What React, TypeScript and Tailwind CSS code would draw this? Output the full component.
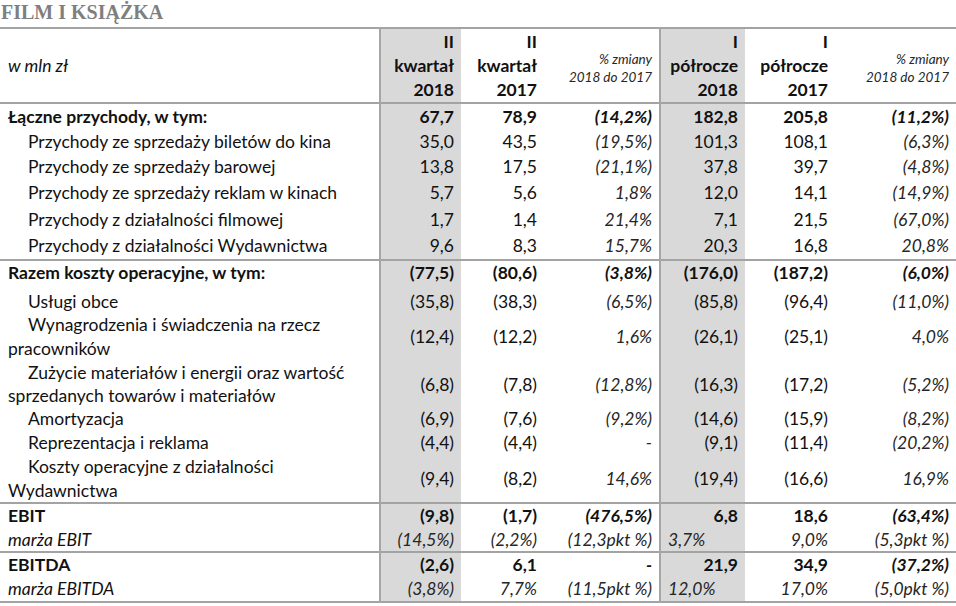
import React from 'react';

type Kind = 'total' | 'item' | 'margin';

type Row = {
  label: React.ReactNode;
  values: string[];
  kind: Kind;
  h: string;
};

const sections: Row[][] = [
  [
    { label: 'Łączne przychody, w tym:', values: ['67,7', '78,9', '(14,2%)', '182,8', '205,8', '(11,2%)'], kind: 'total', h: 'h-[26px]' },
    { label: 'Przychody ze sprzedaży biletów do kina', values: ['35,0', '43,5', '(19,5%)', '101,3', '108,1', '(6,3%)'], kind: 'item', h: 'h-[25px]' },
    { label: 'Przychody ze sprzedaży barowej', values: ['13,8', '17,5', '(21,1%)', '37,8', '39,7', '(4,8%)'], kind: 'item', h: 'h-[25px]' },
    { label: 'Przychody ze sprzedaży reklam w kinach', values: ['5,7', '5,6', '1,8%', '12,0', '14,1', '(14,9%)'], kind: 'item', h: 'h-[27px]' },
    { label: 'Przychody z działalności filmowej', values: ['1,7', '1,4', '21,4%', '7,1', '21,5', '(67,0%)'], kind: 'item', h: 'h-[27px]' },
    { label: 'Przychody z działalności Wydawnictwa', values: ['9,6', '8,3', '15,7%', '20,3', '16,8', '20,8%'], kind: 'item', h: 'h-[27px]' },
  ],
  [
    { label: 'Razem koszty operacyjne, w tym:', values: ['(77,5)', '(80,6)', '(3,8%)', '(176,0)', '(187,2)', '(6,0%)'], kind: 'total', h: 'h-[30px] align-top' },
    { label: 'Usługi obce', values: ['(35,8)', '(38,3)', '(6,5%)', '(85,8)', '(96,4)', '(11,0%)'], kind: 'item', h: 'h-[23px] leading-[23px]' },
    {
      label: (
        <>
          Wynagrodzenia i świadczenia na rzecz
          <br />
          pracowników
        </>
      ),
      values: ['(12,4)', '(12,2)', '1,6%', '(26,1)', '(25,1)', '4,0%'],
      kind: 'item',
      h: 'h-[48px]',
    },
    {
      label: (
        <>
          Zużycie materiałów i energii oraz wartość
          <br />
          sprzedanych towarów i materiałów
        </>
      ),
      values: ['(6,8)', '(7,8)', '(12,8%)', '(16,3)', '(17,2)', '(5,2%)'],
      kind: 'item',
      h: 'h-[46px] leading-[23px]',
    },
    { label: 'Amortyzacja', values: ['(6,9)', '(7,6)', '(9,2%)', '(14,6)', '(15,9)', '(8,2%)'], kind: 'item', h: 'h-[24px]' },
    { label: 'Reprezentacja i reklama', values: ['(4,4)', '(4,4)', '-', '(9,1)', '(11,4)', '(20,2%)'], kind: 'item', h: 'h-[24px]' },
    {
      label: (
        <>
          Koszty operacyjne z działalności
          <br />
          Wydawnictwa
        </>
      ),
      values: ['(9,4)', '(8,2)', '14,6%', '(19,4)', '(16,6)', '16,9%'],
      kind: 'item',
      h: 'h-[47px] leading-[23.5px]',
    },
  ],
  [
    { label: 'EBIT', values: ['(9,8)', '(1,7)', '(476,5%)', '6,8', '18,6', '(63,4%)'], kind: 'total', h: 'h-[24px]' },
    { label: 'marża EBIT', values: ['(14,5%)', '(2,2%)', '(12,3pkt %)', '3,7%', '9,0%', '(5,3pkt %)'], kind: 'margin', h: 'h-[23px] leading-[23px]' },
  ],
  [
    { label: 'EBITDA', values: ['(2,6)', '6,1', '-', '21,9', '34,9', '(37,2%)'], kind: 'total', h: 'h-[24px]' },
    { label: 'marża EBITDA', values: ['(3,8%)', '7,7%', '(11,5pkt %)', '12,0%', '17,0%', '(5,0pkt %)'], kind: 'margin', h: 'h-[24px]' },
  ],
];

const shaded = [true, false, false, true, false, false];
const leftLine = [true, false, false, true, false, false];

const ValueCell = ({ value, index, kind, first }: { value: string; index: number; kind: Kind; first: boolean }) => {
  const isPct = index === 2 || index === 5;
  let cls = 'pr-[7px] text-right';
  if (kind === 'total') cls += isPct ? ' font-bold italic' : ' font-bold';
  if (kind === 'item' && isPct) cls += ' italic text-[#262626]';
  if (kind === 'margin') cls += ' italic text-[#262626]';
  if (kind === 'margin' && index === 3) cls = 'pl-[7px] text-left italic text-[#262626]';
  if (shaded[index]) cls += ' bg-[#d9d9d9]';
  if (leftLine[index]) cls += ' border-l-2 border-l-[#a6a6a6]';
  if (first) cls += ' border-t-2 border-t-[#a3a3a3]';
  return <td className={cls}>{value}</td>;
};

export default function App() {
  return (
    <div className="w-[956px] h-[606px] bg-white text-[#111] font-['Lato','Open_Sans',sans-serif] text-[17.5px] leading-[24px] overflow-hidden">
      <div className="h-[27px] pl-px font-['Liberation_Serif',serif] font-bold text-[20px] leading-[25px] text-[#7f7f7f]">
        FILM I KSIĄŻKA
      </div>
      <table className="w-full table-fixed border-collapse">
        <colgroup>
          <col className="w-[380px]" />
          <col className="w-[81px]" />
          <col className="w-[83px]" />
          <col className="w-[116px]" />
          <col className="w-[85px]" />
          <col className="w-[90px]" />
          <col />
        </colgroup>
        <thead>
          <tr className="h-[75px] border-t-2 border-b-2 border-[#a3a3a3]">
            <th className="pl-2 text-left font-normal italic">w mln zł</th>
            <th className="pr-[7px] text-right font-bold bg-[#d9d9d9] border-l-2 border-l-[#a6a6a6]">
              II
              <br />
              kwartał
              <br />
              2018
            </th>
            <th className="pr-[7px] text-right font-bold">
              II
              <br />
              kwartał
              <br />
              2017
            </th>
            <th className="pr-[7px] pt-1 text-right font-normal italic text-[13.5px] leading-[18px] text-[#262626]">
              % zmiany
              <br />
              2018 do 2017
            </th>
            <th className="pr-[7px] text-right font-bold bg-[#d9d9d9] border-l-2 border-l-[#a6a6a6]">
              I
              <br />
              półrocze
              <br />
              2018
            </th>
            <th className="pr-[7px] text-right font-bold">
              I
              <br />
              półrocze
              <br />
              2017
            </th>
            <th className="pr-[7px] pt-1 text-right font-normal italic text-[13.5px] leading-[18px] text-[#262626]">
              % zmiany
              <br />
              2018 do 2017
            </th>
          </tr>
        </thead>
        <tbody>
          {sections.map((rows, s) =>
            rows.map((row, r) => {
              const first = r === 0 && s > 0;
              let labelCls = 'pl-2 text-left';
              if (row.kind === 'total') labelCls += ' font-bold';
              if (row.kind === 'item') labelCls += ' indent-[20px]';
              if (row.kind === 'margin') labelCls += ' italic';
              if (first) labelCls += ' border-t-2 border-t-[#a3a3a3]';
              return (
                <tr key={`${s}-${r}`} className={row.h}>
                  <td className={labelCls}>{row.label}</td>
                  {row.values.map((v, i) => (
                    <ValueCell key={i} value={v} index={i} kind={row.kind} first={first} />
                  ))}
                </tr>
              );
            })
          )}
          <tr className="h-0 border-t-2 border-[#a3a3a3]">
            <td colSpan={7} className="p-0" />
          </tr>
        </tbody>
      </table>
    </div>
  );
}
